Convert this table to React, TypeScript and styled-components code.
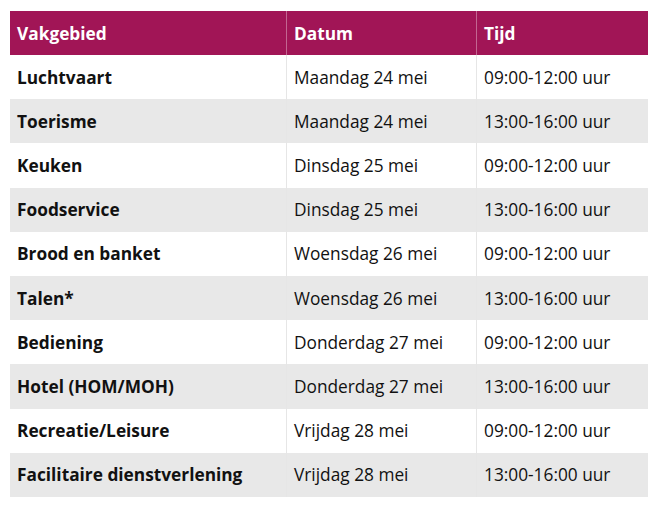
import styled, { createGlobalStyle } from "styled-components";

const GlobalStyle = createGlobalStyle`
  html, body {
    margin: 0;
    padding: 0;
    background: #ffffff;
  }
  body {
    font-family: "Open Sans", "Liberation Sans", sans-serif;
  }
`;

interface Slot {
  area: string;
  date: string;
  time: string;
}

const slots: Slot[] = [
  { area: "Luchtvaart", date: "Maandag 24 mei", time: "09:00-12:00 uur" },
  { area: "Toerisme", date: "Maandag 24 mei", time: "13:00-16:00 uur" },
  { area: "Keuken", date: "Dinsdag 25 mei", time: "09:00-12:00 uur" },
  { area: "Foodservice", date: "Dinsdag 25 mei", time: "13:00-16:00 uur" },
  { area: "Brood en banket", date: "Woensdag 26 mei", time: "09:00-12:00 uur" },
  { area: "Talen*", date: "Woensdag 26 mei", time: "13:00-16:00 uur" },
  { area: "Bediening", date: "Donderdag 27 mei", time: "09:00-12:00 uur" },
  { area: "Hotel (HOM/MOH)", date: "Donderdag 27 mei", time: "13:00-16:00 uur" },
  { area: "Recreatie/Leisure", date: "Vrijdag 28 mei", time: "09:00-12:00 uur" },
  { area: "Facilitaire dienstverlening", date: "Vrijdag 28 mei", time: "13:00-16:00 uur" },
];

export default function App() {
  return (
    <>
      <GlobalStyle />
      <Page>
        <Table>
          <HeadRow>
            <HeadCell>Vakgebied</HeadCell>
            <HeadCell>Datum</HeadCell>
            <HeadCell>Tijd</HeadCell>
          </HeadRow>
          {slots.map((s, i) => (
            <Row key={s.area} striped={i % 2 === 1}>
              <Cell bold>{s.area}</Cell>
              <Cell>{s.date}</Cell>
              <Cell>{s.time}</Cell>
            </Row>
          ))}
        </Table>
      </Page>
    </>
  );
}

const Page = styled.div`
  padding: 11px 12px 12px 10px;
`;

const Table = styled.div`
  width: 638px;
  display: flex;
  flex-direction: column;
`;

const HeadRow = styled.div`
  display: grid;
  grid-template-columns: 276px 190px 1fr;
  height: 44px;
  background: #a11556;
`;

const HeadCell = styled.div`
  display: flex;
  align-items: center;
  padding: 0 7px;
  color: #ffffff;
  font-size: 17.3px;
  font-weight: 700;
  & + & {
    border-left: 1px solid rgba(255, 255, 255, 0.35);
  }
`;

const Row = styled.div<{ striped: boolean }>`
  display: grid;
  grid-template-columns: 276px 190px 1fr;
  height: 44.2px;
  background: ${({ striped }) => (striped ? "#e8e8e8" : "#ffffff")};
`;

const Cell = styled.div<{ bold?: boolean }>`
  display: flex;
  align-items: center;
  padding: 0 7px;
  color: #111111;
  font-size: 17.3px;
  font-weight: ${({ bold }) => (bold ? 700 : 400)};
  & + & {
    border-left: 1px solid #e6e6e6;
  }
`;
